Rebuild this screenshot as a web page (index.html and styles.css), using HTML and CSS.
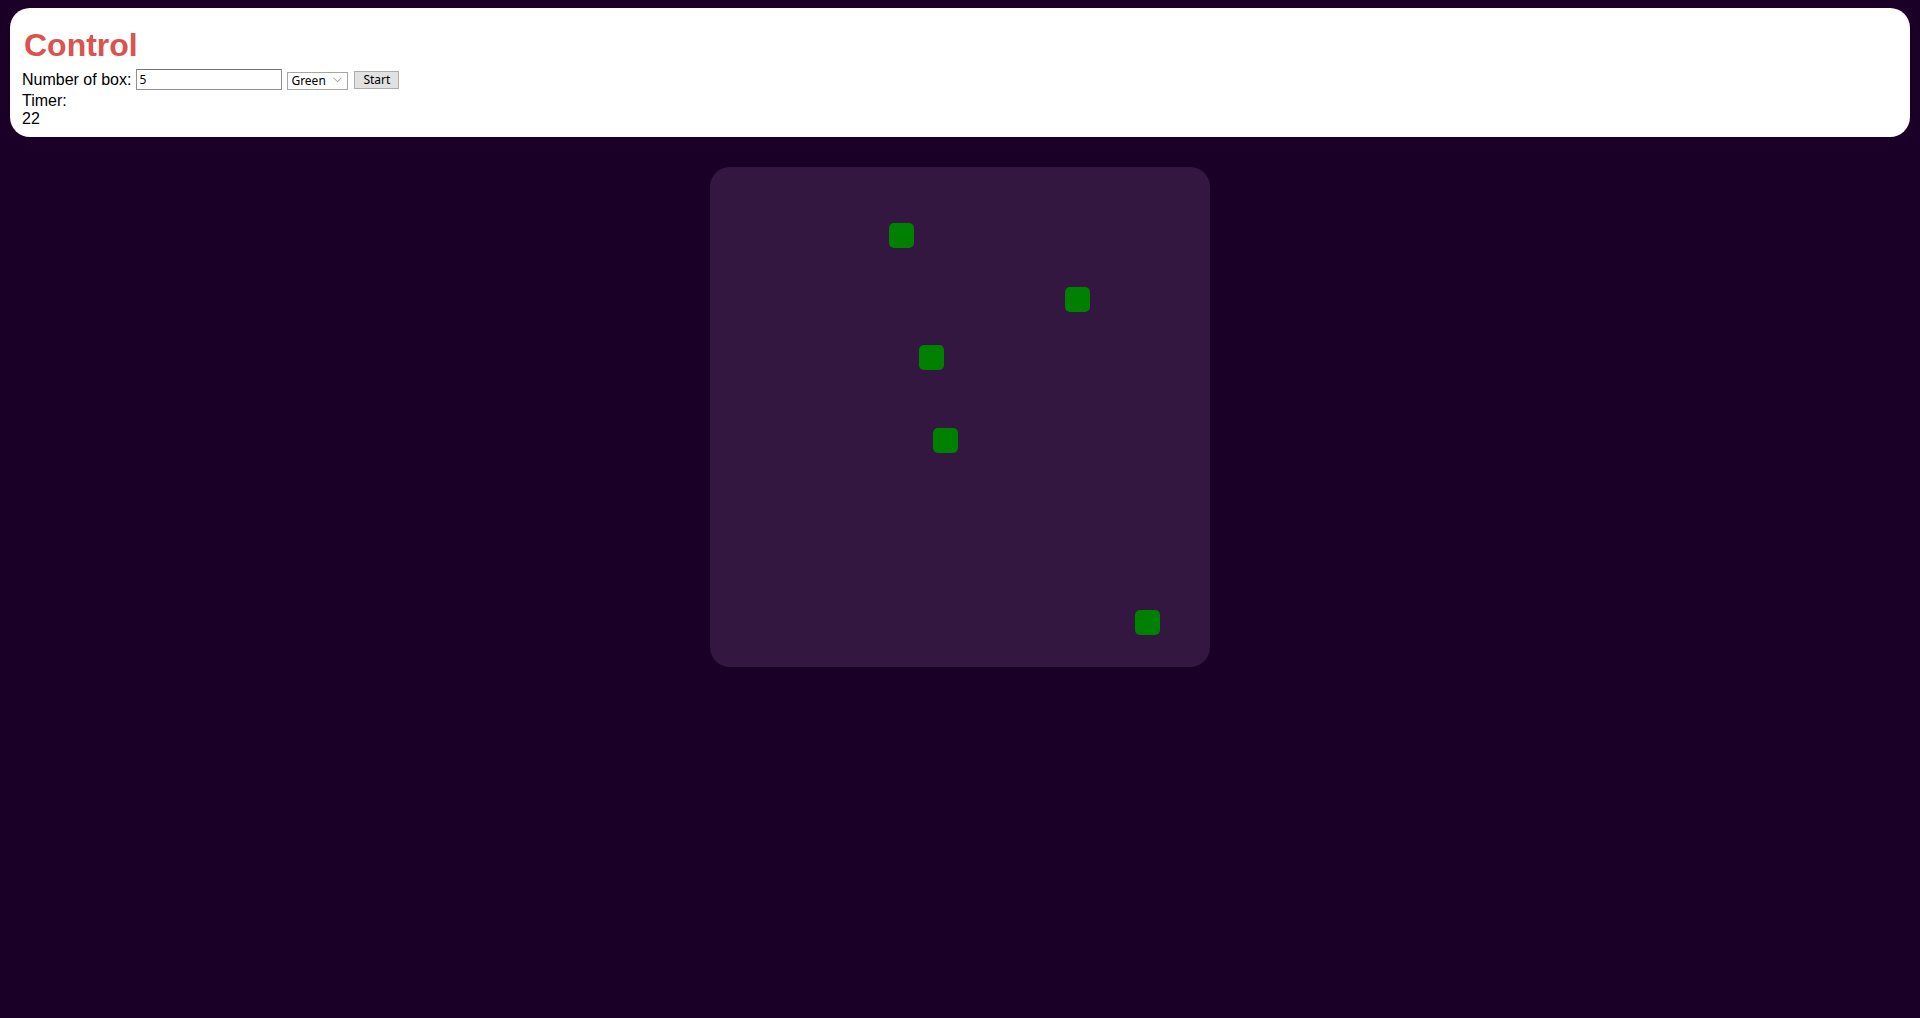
FILE: index.html
```html
<!DOCTYPE html>
<html lang="en">
<head>
<meta charset="utf-8">
<title>Control</title>
<link rel="stylesheet" href="styles.css">
</head>
<body>
  <section class="control">
    <h1 class="control-title">Control</h1>
    <div class="control-row">
      <label class="control-label" for="count">Number of box:</label>
      <input class="control-input" id="count" type="text" value="5">
      <span class="select-wrap">
        <select class="control-select">
          <option>Green</option>
          <option>Red</option>
          <option>Blue</option>
        </select>
        <svg class="select-arrow" width="9" height="6" viewBox="0 0 9 6"><path d="M0.5 0.8 L4.5 4.8 L8.5 0.8" fill="none" stroke="#9a9a9a" stroke-width="1"/></svg>
      </span>
      <button class="control-button" type="button">Start</button>
    </div>
    <div class="timer-label">Timer:</div>
    <div class="timer-value">22</div>
  </section>

  <main class="board">
    <div class="box" style="left:179px;top:56px"></div>
    <div class="box" style="left:355px;top:120px"></div>
    <div class="box" style="left:209px;top:178px"></div>
    <div class="box" style="left:223px;top:261px"></div>
    <div class="box" style="left:425px;top:443px"></div>
  </main>
</body>
</html>
```

FILE: styles.css
```css
html, body {
  margin: 0;
  padding: 0;
}

body {
  background: #1a0026;
  font-family: "Liberation Sans", Arial, sans-serif;
  font-size: 16px;
  color: #000;
  padding: 8px 10px 0;
  min-height: 1018px;
  box-sizing: border-box;
}

.control {
  background: #ffffff;
  border-radius: 20px;
  padding: 19px 12px 9px;
}

.control-title {
  margin: 0 0 5px 2px;
  font-size: 32px;
  line-height: 37px;
  font-weight: bold;
  color: #d9534f;
}

.control-row {
  display: flex;
  align-items: center;
  height: 21px;
  margin-bottom: 2px;
}

.control-label {
  line-height: 18px;
}

.control-input {
  box-sizing: border-box;
  width: 146px;
  height: 21px;
  margin: 0 0 0 5px;
  padding: 1px 2px;
  border: 1px solid #8f8f8f;
  border-top-color: #767676;
  font-family: "Noto Sans", "DejaVu Sans", sans-serif;
  font-size: 12px;
  color: #000;
  background: #fff;
  outline: none;
}

.select-wrap {
  position: relative;
  display: inline-block;
  margin-left: 5px;
  height: 18px;
}

.control-select {
  -webkit-appearance: none;
  appearance: none;
  box-sizing: border-box;
  width: 61px;
  height: 18px;
  margin: 0;
  padding: 0 0 0 3px;
  border: 1px solid #a6a6a6;
  border-radius: 0;
  background: #fff;
  font-family: "Noto Sans", "DejaVu Sans", sans-serif;
  font-size: 12px;
  line-height: 16px;
  color: #000;
}

.select-arrow {
  position: absolute;
  right: 6px;
  top: 6px;
  pointer-events: none;
}

.control-button {
  box-sizing: border-box;
  width: 45px;
  height: 18px;
  margin: 0 0 0 6px;
  padding: 0;
  border: 1px solid #adadad;
  border-radius: 0;
  background: #e1e1e1;
  font-family: "Noto Sans", "DejaVu Sans", sans-serif;
  font-size: 12px;
  line-height: 16px;
  color: #000;
}

.timer-label,
.timer-value {
  line-height: 18px;
}

.board {
  position: relative;
  width: 500px;
  height: 500px;
  margin: 30px auto 0;
  background: #341741;
  border-radius: 20px;
}

.box {
  position: absolute;
  width: 25px;
  height: 25px;
  background: #008000;
  border-radius: 5px;
}
```
